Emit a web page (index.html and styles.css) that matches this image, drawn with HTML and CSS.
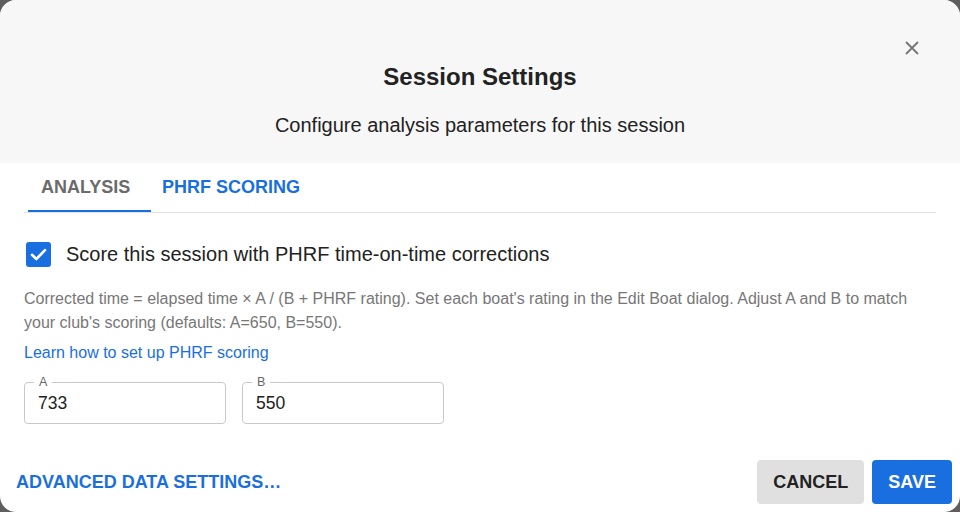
FILE: index.html
```html
<!DOCTYPE html>
<html lang="en">
<head>
<meta charset="utf-8">
<title>Session Settings</title>
<link rel="stylesheet" href="styles.css">
</head>
<body>
<div class="dialog">
  <header class="dialog-header">
    <button class="close-btn" aria-label="Close">
      <svg width="14" height="14" viewBox="0 0 14 14"><path d="M1 1 L13 13 M13 1 L1 13" stroke="#757575" stroke-width="1.8" fill="none"/></svg>
    </button>
    <h1 class="title">Session Settings</h1>
    <p class="subtitle">Configure analysis parameters for this session</p>
  </header>
  <nav class="tabs">
    <div class="tab tab-analysis">ANALYSIS</div>
    <div class="tab tab-phrf">PHRF SCORING</div>
  </nav>
  <main class="content">
    <label class="check-row">
      <span class="checkbox">
        <svg width="25" height="25" viewBox="0 0 25 25"><path d="M6 12.8 L10.3 17 L19 8.2" stroke="#fff" stroke-width="2.6" fill="none" stroke-linecap="round" stroke-linejoin="round"/></svg>
      </span>
      <span class="check-label">Score this session with PHRF time-on-time corrections</span>
    </label>
    <p class="desc">Corrected time = elapsed time × A / (B + PHRF rating). Set each boat's rating in the Edit Boat dialog. Adjust A and B to match your club's scoring (defaults: A=650, B=550).</p>
    <a class="link" href="#">Learn how to set up PHRF scoring</a>
    <div class="fields">
      <div class="field">
        <span class="field-label">A</span>
        <span class="field-value">733</span>
      </div>
      <div class="field">
        <span class="field-label">B</span>
        <span class="field-value">550</span>
      </div>
    </div>
  </main>
  <footer class="footer">
    <button class="btn btn-text">ADVANCED DATA SETTINGS…</button>
    <div class="actions">
      <button class="btn btn-cancel">CANCEL</button>
      <button class="btn btn-save">SAVE</button>
    </div>
  </footer>
</div>
</body>
</html>
```
FILE: styles.css
```css
* { box-sizing: border-box; }
html, body {
  margin: 0;
  padding: 0;
  width: 960px;
  height: 512px;
  background: #5e5e5e;
  font-family: "Liberation Sans", Arial, sans-serif;
  overflow: hidden;
}
.dialog {
  width: 960px;
  height: 512px;
  background: #fff;
  border-radius: 16px;
  overflow: hidden;
  display: flex;
  flex-direction: column;
}
.dialog-header {
  position: relative;
  background: #f7f7f7;
  padding: 61px 0 24px;
  text-align: center;
}
.close-btn {
  position: absolute;
  top: 41px;
  left: 905px;
  width: 14px;
  height: 14px;
  padding: 0;
  border: 0;
  background: none;
  display: block;
}
.close-btn svg { display: block; }
.title {
  margin: 0;
  font-size: 24px;
  line-height: 32px;
  font-weight: 700;
  color: #222;
}
.subtitle {
  margin: 18px 0 0;
  font-size: 20px;
  line-height: 28px;
  color: #222;
}
.tabs {
  display: flex;
  margin: 0 24px;
  padding-left: 4px;
  height: 50px;
  border-bottom: 1px solid #e0e0e0;
}
.tab {
  height: 49px;
  line-height: 49px;
  font-size: 18px;
  font-weight: 700;
}
.tab-analysis {
  width: 123px;
  padding-left: 13px;
  color: #6b6b6b;
  box-shadow: inset 0 -2px 0 #1a6fe0;
}
.tab-phrf {
  margin-left: 11px;
  color: #1a6fe0;
}
.content {
  padding: 0 24px;
}
.check-row {
  margin-top: 26px;
  height: 30px;
  display: flex;
  align-items: center;
}
.checkbox {
  width: 25px;
  height: 25px;
  margin-left: 2px;
  border-radius: 3px;
  background: #1a6fe0;
  display: block;
}
.checkbox svg { display: block; }
.check-label {
  margin-left: 15px;
  font-size: 20px;
  line-height: 30px;
  color: #222;
}
.desc {
  margin: 18px 0 0;
  font-size: 16px;
  line-height: 24px;
  color: #777;
}
.link {
  display: block;
  margin-top: 6px;
  font-size: 16px;
  line-height: 24px;
  color: #1a6fe0;
  text-decoration: none;
}
.fields {
  display: flex;
  gap: 16px;
  margin-top: 17px;
}
.field {
  position: relative;
  width: 202px;
  height: 42px;
  border: 1px solid #c8c8c8;
  border-radius: 4px;
  display: flex;
  align-items: center;
  padding-left: 13px;
}
.field-label {
  position: absolute;
  top: -8px;
  left: 9px;
  padding: 0 5px;
  background: #fff;
  font-size: 12.5px;
  line-height: 14px;
  color: #666;
}
.field-value {
  font-size: 17.5px;
  color: #222;
  padding-top: 1px;
}
.footer {
  margin-top: auto;
  padding: 8px;
  display: flex;
  justify-content: space-between;
  align-items: center;
}
.actions {
  display: flex;
  gap: 8px;
}
.btn {
  font-family: "Liberation Sans", Arial, sans-serif;
  font-size: 18px;
  font-weight: 700;
  height: 44px;
  border: 0;
  border-radius: 4px;
  padding: 0 16px;
  cursor: pointer;
}
.btn-text {
  background: none;
  color: #1a6fe0;
  padding: 0 8px;
}
.btn-cancel {
  background: #e0e0e0;
  color: #222;
}
.btn-save {
  background: #1a6fe0;
  color: #fff;
}
```
